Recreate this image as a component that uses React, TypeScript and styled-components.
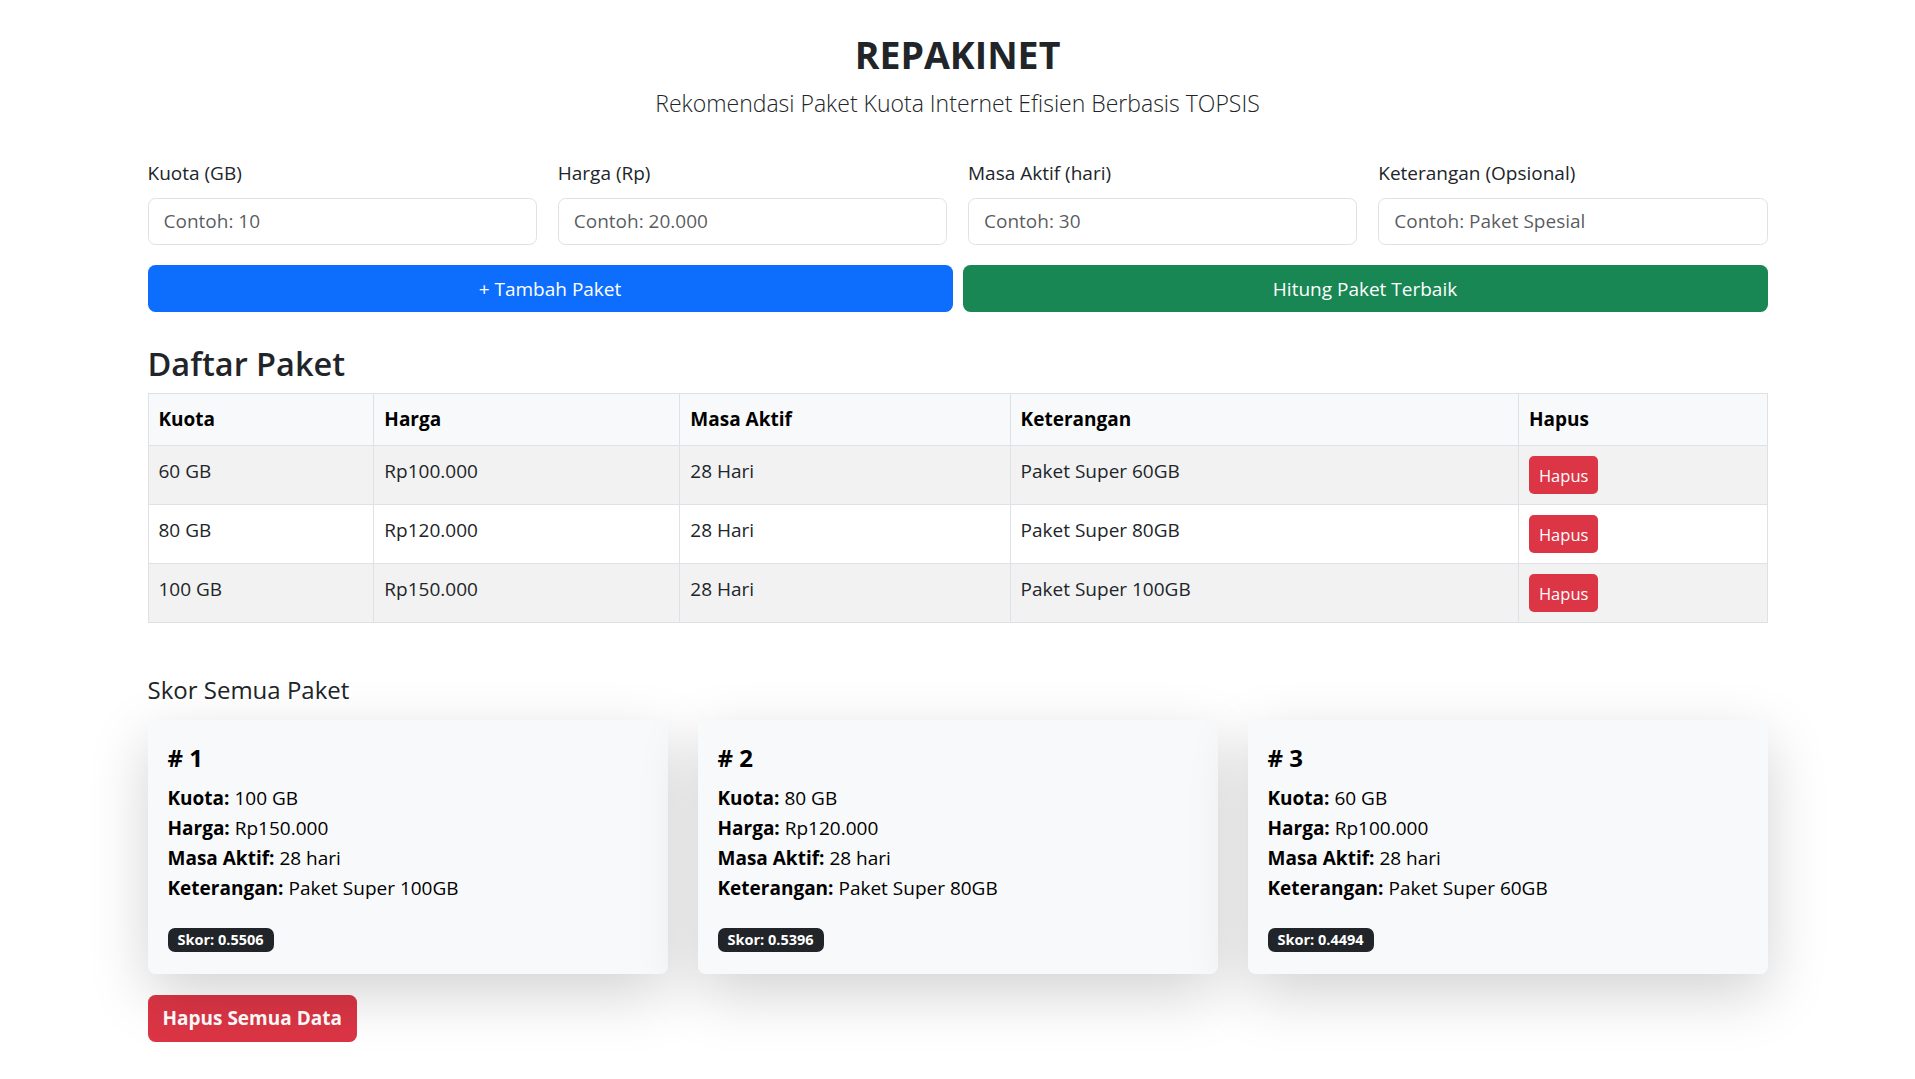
import React from "react";
import styled, { createGlobalStyle } from "styled-components";

const GlobalStyle = createGlobalStyle`
  * {
    box-sizing: border-box;
  }

  body {
    margin: 0;
    background: #ffffff;
    color: #212529;
    font-family: "Open Sans", "Noto Sans", "Liberation Sans", sans-serif;
    font-size: 19px;
    line-height: 30px;
  }
`;

const paket = [
  { kuota: 60, harga: "Rp100.000", masa: 28, ket: "Paket Super 60GB" },
  { kuota: 80, harga: "Rp120.000", masa: 28, ket: "Paket Super 80GB" },
  { kuota: 100, harga: "Rp150.000", masa: 28, ket: "Paket Super 100GB" },
];

const ranking = [
  { rank: 1, kuota: 100, harga: "Rp150.000", ket: "Paket Super 100GB", skor: "0.5506" },
  { rank: 2, kuota: 80, harga: "Rp120.000", ket: "Paket Super 80GB", skor: "0.5396" },
  { rank: 3, kuota: 60, harga: "Rp100.000", ket: "Paket Super 60GB", skor: "0.4494" },
];

const fields = [
  { label: "Kuota (GB)", placeholder: "Contoh: 10" },
  { label: "Harga (Rp)", placeholder: "Contoh: 20.000" },
  { label: "Masa Aktif (hari)", placeholder: "Contoh: 30" },
  { label: "Keterangan (Opsional)", placeholder: "Contoh: Paket Spesial" },
];

const columns = [
  { title: "Kuota", width: "13.95%" },
  { title: "Harga", width: "18.9%" },
  { title: "Masa Aktif", width: "20.4%" },
  { title: "Keterangan", width: "31.4%" },
  { title: "Hapus", width: "15.35%" },
];

function App() {
  return (
    <>
      <GlobalStyle />
      <Container>
        <Header>
          <Title>REPAKINET</Title>
          <Subtitle>Rekomendasi Paket Kuota Internet Efisien Berbasis TOPSIS</Subtitle>
        </Header>

        <FormGrid>
          {fields.map((f) => (
            <Field key={f.label}>
              <Label>{f.label}</Label>
              <Input placeholder={f.placeholder} />
            </Field>
          ))}
        </FormGrid>

        <ActionRow>
          <Button variant="primary">+ Tambah Paket</Button>
          <Button variant="success">Hitung Paket Terbaik</Button>
        </ActionRow>

        <SectionTitle>Daftar Paket</SectionTitle>
        <Table>
          <colgroup>
            {columns.map((c) => (
              <Col key={c.title} width={c.width} />
            ))}
          </colgroup>
          <thead>
            <tr>
              {columns.map((c) => (
                <Th key={c.title}>{c.title}</Th>
              ))}
            </tr>
          </thead>
          <tbody>
            {paket.map((p, i) => (
              <Tr key={p.ket} striped={i % 2 === 0}>
                <Td>{p.kuota} GB</Td>
                <Td>{p.harga}</Td>
                <Td>{p.masa} Hari</Td>
                <Td>{p.ket}</Td>
                <Td>
                  <SmallButton>Hapus</SmallButton>
                </Td>
              </Tr>
            ))}
          </tbody>
        </Table>

        <ScoreTitle>Skor Semua Paket</ScoreTitle>
        <CardGrid>
          {ranking.map((r) => (
            <Card key={r.rank}>
              <CardTitle># {r.rank}</CardTitle>
              <CardText>
                <div>
                  <b>Kuota:</b> {r.kuota} GB
                </div>
                <div>
                  <b>Harga:</b> {r.harga}
                </div>
                <div>
                  <b>Masa Aktif:</b> 28 hari
                </div>
                <div>
                  <b>Keterangan:</b> {r.ket}
                </div>
              </CardText>
              <div>
                <Badge>Skor: {r.skor}</Badge>
              </div>
            </Card>
          ))}
        </CardGrid>

        <DangerButton>Hapus Semua Data</DangerButton>
      </Container>
    </>
  );
}

const Container = styled.div`
  max-width: 1620px;
  margin: 0 auto;
  padding: 31px 0 40px;
`;

const Header = styled.header`
  text-align: center;
  margin-bottom: 36px;
`;

const Title = styled.h1`
  margin: 0 0 6px;
  font-size: 37.5px;
  line-height: 48px;
  font-weight: 700;
`;

const Subtitle = styled.p`
  margin: 0;
  font-size: 23px;
  line-height: 37px;
  font-weight: 300;
`;

const FormGrid = styled.div`
  display: grid;
  grid-template-columns: repeat(4, 1fr);
  column-gap: 21px;
`;

const Field = styled.div`
  display: flex;
  flex-direction: column;
`;

const Label = styled.label`
  margin-bottom: 10px;
  font-size: 19px;
  line-height: 30px;
`;

const Input = styled.input`
  height: 46.5px;
  padding: 0 15px;
  border: 1px solid #dee2e6;
  border-radius: 7.5px;
  background: #fff;
  font-family: inherit;
  font-size: 19px;
  color: #212529;

  &::placeholder {
    color: rgba(33, 37, 41, 0.75);
  }
`;

const ActionRow = styled.div`
  display: grid;
  grid-template-columns: 1fr 1fr;
  gap: 10px;
  margin-top: 20.5px;
`;

const buttonColors = {
  primary: "#0d6efd",
  success: "#198754",
};

const Button = styled.button<{ variant: "primary" | "success" }>`
  height: 47px;
  border: none;
  border-radius: 7.5px;
  background: ${({ variant }) => buttonColors[variant]};
  color: #fff;
  font-family: inherit;
  font-size: 19px;
`;

const SectionTitle = styled.h2`
  margin: 28px 0 5px;
  font-size: 32.5px;
  line-height: 48px;
  font-weight: 600;
`;

const Table = styled.table`
  width: 100%;
  border-collapse: collapse;
  table-layout: fixed;
`;

const Col = styled.col<{ width: string }>`
  width: ${({ width }) => width};
`;

const Th = styled.th`
  padding: 10px;
  border: 1px solid #dee2e6;
  background: #f8f9fa;
  text-align: left;
  font-weight: 700;
  color: #000;
  line-height: 31px;
`;

const Tr = styled.tr<{ striped: boolean }>`
  background: ${({ striped }) => (striped ? "#f2f2f2" : "#ffffff")};
`;

const Td = styled.td`
  padding: 10px;
  border: 1px solid #dee2e6;
  vertical-align: top;
  line-height: 30px;
`;

const SmallButton = styled.button`
  display: block;
  height: 38px;
  padding: 0 10px;
  border: none;
  border-radius: 5px;
  background: #dc3545;
  color: #fff;
  font-family: inherit;
  font-size: 16.5px;
`;

const ScoreTitle = styled.h5`
  margin: 52px 0 15px;
  font-size: 24px;
  line-height: 30px;
  font-weight: 500;
`;

const CardGrid = styled.div`
  display: grid;
  grid-template-columns: repeat(3, 1fr);
  gap: 30px;
`;

const Card = styled.div`
  position: relative;
  padding: 23px 20px 21px;
  border-radius: 7.5px;
  background: #f8f9fa;
  box-shadow: 0 20px 60px rgba(0, 0, 0, 0.175);
`;

const CardTitle = styled.h5`
  margin: 0 0 10px;
  font-size: 24px;
  line-height: 30px;
  font-weight: 700;
  color: #000;
`;

const CardText = styled.div`
  margin-bottom: 20px;
  color: #000;

  b {
    font-weight: 700;
  }
`;

const Badge = styled.span`
  display: inline-block;
  padding: 4.5px 10px;
  border-radius: 7px;
  background: #212529;
  color: #fff;
  font-size: 14.5px;
  line-height: 15px;
  font-weight: 700;
  vertical-align: middle;
`;

const DangerButton = styled.button`
  display: block;
  height: 46.5px;
  margin-top: 21px;
  padding: 0 15px;
  border: none;
  border-radius: 7.5px;
  background: #dc3545;
  color: #fff;
  font-family: inherit;
  font-size: 19px;
  font-weight: 700;
`;

export default App;
